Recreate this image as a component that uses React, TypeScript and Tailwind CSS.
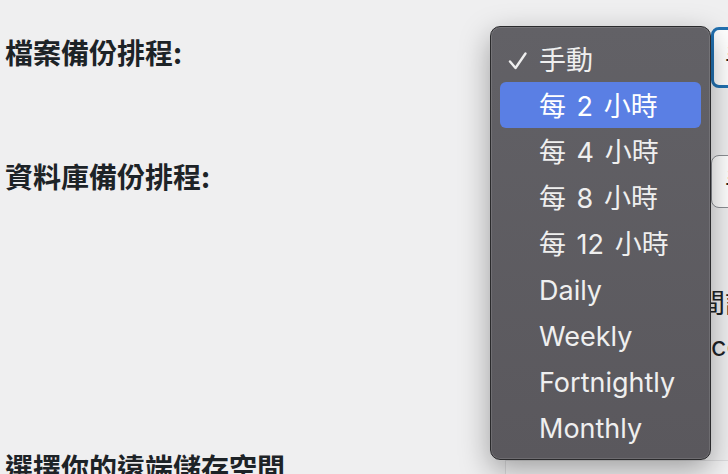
import React from "react";

const items = ["手動", "每 2 小時", "每 4 小時", "每 8 小時", "每 12 小時", "Daily", "Weekly", "Fortnightly", "Monthly"];

export default function App() {
  const cjk = { fontFamily: '"Noto Sans CJK TC", "Noto Sans", sans-serif' };
  const menuFont = { fontFamily: 'Inter, "Noto Sans CJK TC", sans-serif' };
  return (
    <div className="relative w-[728px] h-[474px] overflow-hidden bg-[#efeff0] text-[#1d2327]" style={cjk}>
      <div className="flex flex-col pl-[5px]">
        {/* Row 1 */}
        <div className="flex items-start pt-[27px]">
          <div className="w-[706px] shrink-0 mt-[7px] text-[28px] leading-[36px] font-bold">檔案備份排程:</div>
          <div className="w-[300px] h-[61px] shrink-0 rounded-[8px] border-[3px] border-[#2271b1] bg-white pl-[11px] flex items-center text-[27px]">手動</div>
        </div>
        {/* Row 2 */}
        <div className="flex items-start mt-[67px]">
          <div className="w-[706px] shrink-0 mt-[3px] text-[28px] leading-[36px] font-bold">資料庫備份排程:</div>
          <div className="w-[300px] h-[53px] shrink-0 rounded-[8px] border border-[#8c8f94] bg-white pl-[13px] flex items-center text-[27px]">手動</div>
        </div>
        {/* Description */}
        <div className="mt-[71px] text-[27px] leading-[45px] whitespace-nowrap">
          <div className="ml-[666px]">空間設定</div>
          <div className="ml-[706px]" style={{ fontFamily: 'Inter, sans-serif' }}>configure</div>
        </div>
        {/* Heading + box */}
        <div className="flex items-start mt-[80px]">
          <div className="w-[500px] shrink-0 text-[28px] leading-[36px] font-bold whitespace-nowrap">選擇你的遠端儲存空間</div>
          <div className="mt-[11px] w-[300px] h-[60px] shrink-0 border border-[#dcdcde] bg-[#f3f3f4]"></div>
        </div>
      </div>

      {/* Dropdown menu */}
      <div
        className="absolute left-[490px] top-[26px] w-[221px] h-[434px] rounded-[10px] border border-[#2a2a2c] bg-gradient-to-b from-[#626166] to-[#5a585d] shadow-[0_10px_30px_rgba(0,0,0,0.35),inset_0_0_0_1px_rgba(255,255,255,0.12)] py-[9px] px-[9px]"
        style={menuFont}
      >
        {items.map((t, i) => (
          <div
            key={t}
            className={
              i === 1
                ? "relative h-[46px] rounded-[6px] bg-[#5a7fe4] flex items-center pt-[3px] pl-[39px] text-[27px] text-white [word-spacing:3px]"
                : "relative h-[46px] rounded-[6px] flex items-center pt-[3px] pl-[39px] text-[27px] text-[#efefef] [word-spacing:3px]"
            }
          >
            {i === 0 && (
              <svg className="absolute left-[8px] top-[15px]" width="20" height="20" viewBox="0 0 20 20" fill="none">
                <path d="M2 10.5 L7.5 17 L17.5 2.5" stroke="#efefef" strokeWidth="2.4" strokeLinecap="round" strokeLinejoin="round" />
              </svg>
            )}
            <span className="leading-none">{t}</span>
          </div>
        ))}
      </div>
    </div>
  );
}
